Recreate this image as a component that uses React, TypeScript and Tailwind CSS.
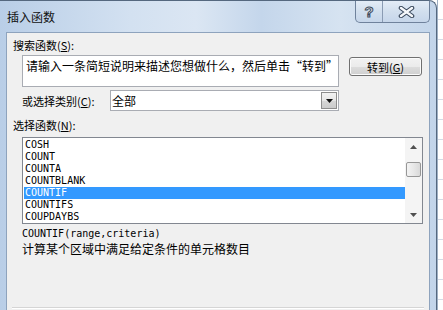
export default function App() {
  const items = ["COSH", "COUNT", "COUNTA", "COUNTBLANK", "COUNTIF", "COUNTIFS", "COUPDAYBS"];
  return (
    <div className="w-[443px] h-[310px] overflow-hidden flex bg-[repeating-linear-gradient(180deg,#ffffff_0px,#ffffff_19px,#d4dbe6_19px,#d4dbe6_20px)] font-['Noto_Sans_CJK_SC',sans-serif] text-black">
      <div className="w-[437px] h-full flex flex-col rounded-tr-[8px] border-t border-r border-[#55687f] bg-[linear-gradient(90deg,#b9cee7_0%,#d3e1f1_30%,#dbe6f3_45%,#c4d6eb_60%,#d6e3f1_78%,#c3d5ea_100%)]">
        {/* title bar */}
        <div className="h-[31px] flex items-start">
          <div className="flex-1 pl-[7px] pt-[8px] text-[12px] leading-[16px] text-[#111]">插入函数</div>
          <div className="mr-[6px] flex h-[22px] rounded-b-[5px] border border-t-0 border-[#6f829c] bg-[linear-gradient(180deg,#e3ecf7_0%,#d2dfee_50%,#c6d6ea_100%)] overflow-hidden">
            <div className="w-[27px] flex items-center justify-center border-r border-[#8a9bb3]">
              <span className="font-['Liberation_Sans',sans-serif] font-bold text-[15px] leading-[15px] text-[#f4f7fb] [-webkit-text-stroke:1px_#3c4a5c]">?</span>
            </div>
            <div className="w-[46px] flex items-center justify-center">
              <svg width="17" height="12" viewBox="0 0 17 12">
                <path d="M3 2 L14 10 M14 2 L3 10" stroke="#3b4a5e" strokeWidth="4.6" strokeLinecap="round" fill="none" />
                <path d="M3 2 L14 10 M14 2 L3 10" stroke="#f6f8fb" strokeWidth="2.4" strokeLinecap="round" fill="none" />
              </svg>
            </div>
          </div>
        </div>
        {/* client */}
        <div className="flex-1 ml-[6px] mr-[6px] border-l border-t border-r border-[#8ea3bd] bg-[#f0f0f0] flex flex-col">
          <div className="pl-[6px] mt-[5px] text-[11px] leading-[14px]">
            搜索函数(<u>S</u>):
          </div>
          <div className="flex items-start pl-[15px] mt-[3px]">
            <div className="w-[317px] h-[32px] bg-white border border-[#a9acb3] pl-[3px] pt-[2px] text-[12px] leading-[16px] whitespace-nowrap overflow-hidden">
              请输入一条简短说明来描述您想做什么，然后单击“转到”
            </div>
            <button className="ml-[10px] mt-[2px] w-[73px] h-[19px] rounded-[3px] border border-[#707070] bg-[linear-gradient(180deg,#f2f2f2_0%,#ebebeb_50%,#dddddd_51%,#cfcfcf_100%)] shadow-[inset_0_0_0_1px_#fbfbfb] text-[11px] leading-[16px] flex items-center justify-center">
              转到(<u>G</u>)
            </button>
          </div>
          <div className="flex items-center pl-[15px] mt-[3px]">
            <div className="w-[88px] text-[11px] leading-[14px]">
              或选择类别(<u>C</u>):
            </div>
            <div className="w-[229px] h-[21px] border border-[#a9acb3] bg-white flex items-center">
              <span className="flex-1 pl-[1px] text-[12px] leading-[16px]">全部</span>
              <div className="w-[16px] h-[17px] mr-[1px] border border-[#8d8d8d] bg-[linear-gradient(180deg,#f2f2f2_0%,#e6e6e6_50%,#d6d6d6_51%,#cbcbcb_100%)] flex items-center justify-center">
                <svg width="7" height="4" viewBox="0 0 7 4">
                  <path d="M0 0 H7 L3.5 4 Z" fill="#111" />
                </svg>
              </div>
            </div>
          </div>
          <div className="pl-[6px] mt-[7px] text-[11px] leading-[14px]">
            选择函数(<u>N</u>):
          </div>
          <div className="ml-[15px] mt-[5px] w-[401px] h-[87px] border border-[#828790] bg-white flex">
            <div className="flex-1 overflow-hidden pt-[1px] font-['DejaVu_Sans_Mono',monospace] text-[10px] leading-[12px]">
              {items.map((it) => (
                <div
                  key={it}
                  className={
                    it === "COUNTIF"
                      ? "ml-[1px] pl-[1px] h-[12px] bg-[#3399ff] text-white"
                      : "ml-[1px] pl-[1px] h-[12px]"
                  }
                >
                  {it}
                </div>
              ))}
            </div>
            <div className="w-[17px] h-full bg-[#f4f4f4] flex flex-col items-center">
              <div className="h-[17px] w-full flex items-center justify-center">
                <svg width="7" height="4" viewBox="0 0 7 4">
                  <path d="M0 4 H7 L3.5 0 Z" fill="#505050" />
                </svg>
              </div>
              <div className="mt-[7px] w-[15px] h-[15px] rounded-[2px] border border-[#979797] bg-[linear-gradient(90deg,#f3f3f3_0%,#e8e8e8_50%,#d9d9d9_100%)]" />
              <div className="flex-1" />
              <div className="h-[17px] w-full flex items-center justify-center">
                <svg width="7" height="4" viewBox="0 0 7 4">
                  <path d="M0 0 H7 L3.5 4 Z" fill="#505050" />
                </svg>
              </div>
            </div>
          </div>
          <div className="ml-[15px] mt-[4px] font-['DejaVu_Sans_Mono',monospace] text-[10px] leading-[12px]">
            COUNTIF(range,criteria)
          </div>
          <div className="ml-[15px] mt-[1px] text-[12px] leading-[16px]">
            计算某个区域中满足给定条件的单元格数目
          </div>
          <div className="mt-auto mx-[5px] mb-[1px] border-t border-[#d5d5d5] border-b border-b-white" />
        </div>
      </div>
      <div className="flex-1 h-full border-l border-[#9fb0c4]" />
    </div>
  );
}
